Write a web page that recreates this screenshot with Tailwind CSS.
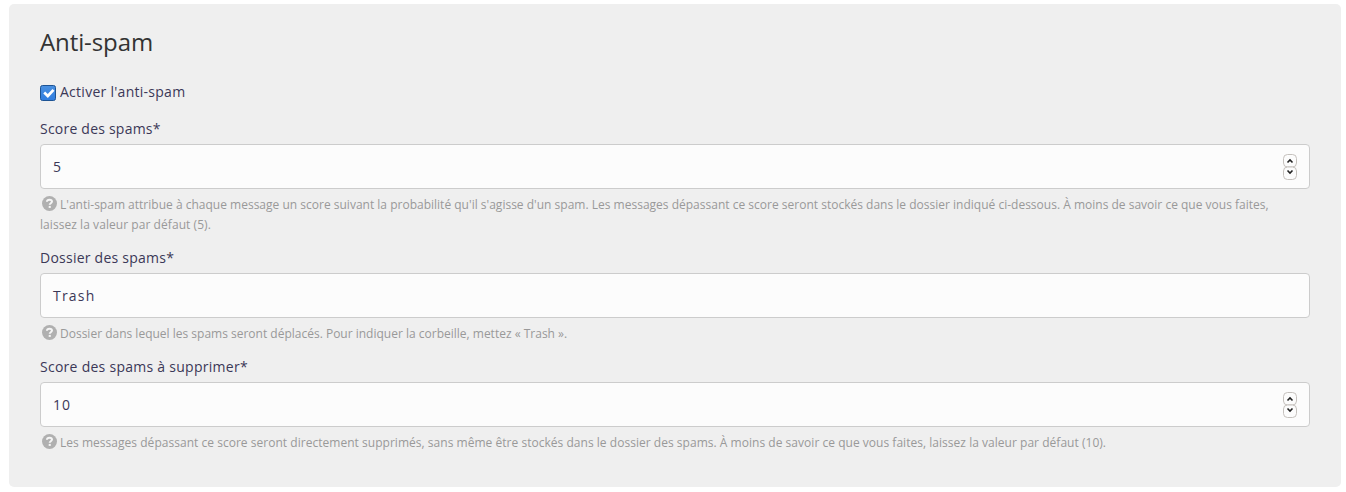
<!DOCTYPE html>
<html lang="fr"><head><meta charset="utf-8"><title>Anti-spam</title>
<script src="https://cdn.jsdelivr.net/npm/@tailwindcss/browser@4"></script></head>
<body class="bg-white font-['Open_Sans',sans-serif] text-[#3b3857]">
<svg class="hidden">
<symbol id="help" viewBox="0 0 15 15"><circle cx="7.500" cy="7.500" r="7.500" fill="#b0b0b0"/><path d="M4.900 5.800C5 4.300 6.100 3.700 7.500 3.700c1.500 0 2.500.7 2.500 1.900 0 1.600-2.300 1.700-2.300 3.200" fill="none" stroke="#f5f5f5" stroke-width="2"/><path d="M6.700 9.900h2.100v2H6.700z" fill="#f5f5f5"/></symbol>
<symbol id="spin" viewBox="0 0 14 28"><rect x=".5" y="1.500" width="13" height="12.500" rx="4" fill="#fcfcfc" stroke="#c5c1bd"/><rect x=".5" y="14" width="13" height="12.500" rx="4" fill="#fcfcfc" stroke="#c5c1bd"/><path d="M4.500 9.500 7 7l2.500 2.500M4.500 17.500 7 20l2.500-2.500" fill="none" stroke="#222" stroke-width="1.600"/></symbol>
</svg>
<main class="ml-[9px] mt-1 h-[483px] w-[1332px] rounded-[5px] bg-[#efefef] px-[31px] pt-[22px]">
<h1 class="text-2xl tracking-[-0.1px] text-[#333]">Anti-spam</h1>
<label class="mt-6 flex h-5 items-center gap-1 text-sm tracking-[0.27px]"><svg class="mt-[2px] size-4" viewBox="0 0 16 16"><defs><linearGradient id="blue" x2="0" y2="1"><stop stop-color="#4a90e0"/><stop offset="1" stop-color="#2f7de0"/></linearGradient></defs><rect x=".5" y=".5" width="15" height="15" rx="2" fill="url(#blue)" stroke="#1d5393"/><path d="m4.200 7.600 3.600 3.400 5.700-6.200" fill="none" stroke="white" stroke-width="2.700"/></svg>Activer l'anti-spam</label>
<section class="mt-[17px]"><div class="h-[25px] text-sm leading-5 tracking-[0.22px]">Score des spams*</div>
<div class="flex h-[45px] items-center justify-between rounded-[4px] border border-[#ccc] bg-[#fcfcfc] px-3 text-sm tracking-[1px]"><span>5</span><svg class="h-7 w-[14px]"><use href="#spin"/></svg></div>
<p class="mt-[6px] text-xs leading-5 text-[#999]"><svg class="ml-[2px] mr-[3px] inline size-[15px] align-[-2px]"><use href="#help"/></svg><span class="tracking-[0.006px]">L'anti-spam attribue à chaque message un score suivant la probabilité qu'il s'agisse d'un spam. Les messages dépassant ce score seront stockés dans le dossier indiqué ci-dessous. À moins de savoir ce que vous faites,</span><br><span class="tracking-[0.06px]">laissez la valeur par défaut (5).</span></p></section>
<section class="mt-[13px]"><div class="h-[25px] text-sm leading-5 tracking-[0.24px]">Dossier des spams*</div>
<div class="flex h-[45px] items-center rounded-[4px] border border-[#ccc] bg-[#fcfcfc] px-3 text-sm tracking-[1.2px]">Trash</div>
<p class="mt-[6px] text-xs leading-5 text-[#999]"><svg class="ml-[2px] mr-[3px] inline size-[15px] align-[-2px]"><use href="#help"/></svg>Dossier dans lequel les spams seront déplacés. Pour indiquer la corbeille, mettez « Trash ».</p></section>
<section class="mt-[13px]"><div class="h-[25px] text-sm leading-5 tracking-[0.27px]">Score des spams à supprimer*</div>
<div class="flex h-[45px] items-center justify-between rounded-[4px] border border-[#ccc] bg-[#fcfcfc] px-3 text-sm tracking-[1px]"><span>10</span><svg class="h-7 w-[14px]"><use href="#spin"/></svg></div>
<p class="mt-[6px] text-xs leading-5 text-[#999]"><svg class="ml-[2px] mr-[3px] inline size-[15px] align-[-2px]"><use href="#help"/></svg><span class="tracking-[0.028px]">Les messages dépassant ce score seront directement supprimés, sans même être stockés dans le dossier des spams. À moins de savoir ce que vous faites, laissez la valeur par défaut (10).</span></p></section>
</main></body></html>
